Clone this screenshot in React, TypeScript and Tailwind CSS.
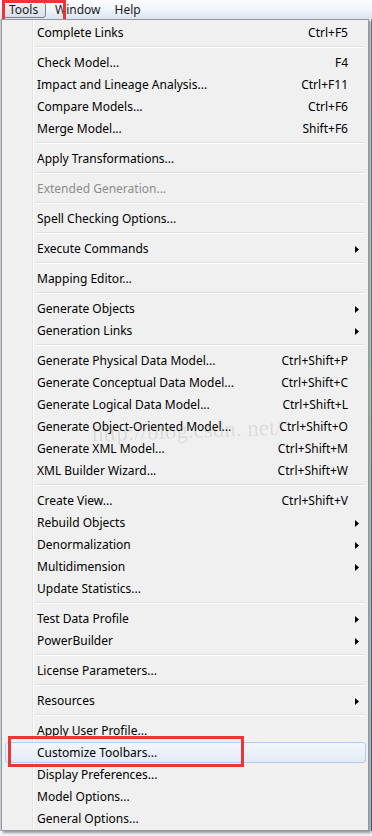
type Row =
  | { sep: true }
  | {
      sep?: false;
      label: string;
      shortcut?: string;
      sub?: boolean;
      disabled?: boolean;
      hot?: boolean;
    };

const rows: Row[] = [
  { label: "Complete Links", shortcut: "Ctrl+F5" },
  { sep: true },
  { label: "Check Model...", shortcut: "F4" },
  { label: "Impact and Lineage Analysis...", shortcut: "Ctrl+F11" },
  { label: "Compare Models...", shortcut: "Ctrl+F6" },
  { label: "Merge Model...", shortcut: "Shift+F6" },
  { sep: true },
  { label: "Apply Transformations..." },
  { sep: true },
  { label: "Extended Generation...", disabled: true },
  { sep: true },
  { label: "Spell Checking Options..." },
  { sep: true },
  { label: "Execute Commands", sub: true },
  { sep: true },
  { label: "Mapping Editor..." },
  { sep: true },
  { label: "Generate Objects", sub: true },
  { label: "Generation Links", sub: true },
  { sep: true },
  { label: "Generate Physical Data Model...", shortcut: "Ctrl+Shift+P" },
  { label: "Generate Conceptual Data Model...", shortcut: "Ctrl+Shift+C" },
  { label: "Generate Logical Data Model...", shortcut: "Ctrl+Shift+L" },
  { label: "Generate Object-Oriented Model...", shortcut: "Ctrl+Shift+O" },
  { label: "Generate XML Model...", shortcut: "Ctrl+Shift+M" },
  { label: "XML Builder Wizard...", shortcut: "Ctrl+Shift+W" },
  { sep: true },
  { label: "Create View...", shortcut: "Ctrl+Shift+V" },
  { label: "Rebuild Objects", sub: true },
  { label: "Denormalization", sub: true },
  { label: "Multidimension", sub: true },
  { label: "Update Statistics..." },
  { sep: true },
  { label: "Test Data Profile", sub: true },
  { label: "PowerBuilder", sub: true },
  { sep: true },
  { label: "License Parameters..." },
  { sep: true },
  { label: "Resources", sub: true },
  { sep: true },
  { label: "Apply User Profile..." },
  { label: "Customize Toolbars...", hot: true },
  { label: "Display Preferences..." },
  { label: "Model Options..." },
  { label: "General Options..." },
];

function Gutter() {
  return (
    <>
      <div className="w-[29px] shrink-0" />
      <div className="w-px shrink-0 bg-[#e2e3e3]" />
      <div className="w-px shrink-0 bg-white" />
    </>
  );
}

function Arrow() {
  return (
    <svg width="4" height="7" viewBox="0 0 4 7" className="ml-[7px]">
      <polygon points="0,0 4,3.5 0,7" fill="#000" />
    </svg>
  );
}

export default function App() {
  return (
    <div
      className="relative w-[372px] h-[836px] overflow-hidden bg-[#eef1f5] text-[12px] text-black"
      style={{ fontFamily: '"Noto Sans", "Open Sans", sans-serif' }}
    >
      {/* menu bar */}
      <div className="h-[19px] flex items-start pl-[3px] pt-[2px] bg-gradient-to-b from-[#fbfcfe] via-[#f1f5fa] to-[#dae3f0] text-[#1b1b1b]">
        <div className="w-[43px] h-[16px] rounded-[3px] border border-[#7c8189] bg-gradient-to-b from-[#eef1f5] to-[#d9e0ea] shadow-[inset_0_1px_0_rgba(255,255,255,0.8)] flex items-center pl-[5px] leading-none">
          Tools
        </div>
        <div className="ml-[9px] h-[16px] flex items-center leading-none">Window</div>
        <div className="ml-[14px] h-[16px] flex items-center leading-none">Help</div>
      </div>

      {/* annotation on Tools */}
      <div className="absolute left-[2px] top-0 w-[64px] h-[24px] border-[3px] border-[#ee3535]" />

      <div className="flex">
        <div className="w-px shrink-0 bg-[#c4cedb]" />
        <div className="relative w-[368px] shrink-0 border border-[#979797] bg-[#f0f0f0] p-px shadow-[2px_2px_2px_rgba(0,0,0,0.35)]">
          {rows.map((r, i) =>
            r.sep ? (
              <div key={i} className="flex h-[8px]">
                <Gutter />
                <div className="flex-1 pt-[3px] pl-px pr-[3px]">
                  <div className="h-px bg-[#e0e0e0]" />
                  <div className="h-px bg-white" />
                </div>
              </div>
            ) : (
              <div key={i} className="relative flex h-[22px]">
                {r.hot && (
                  <div className="absolute left-[2px] right-[1px] top-px bottom-0 rounded-[3px] border border-[#aecdf3] bg-gradient-to-b from-[#f3f7fc] to-[#e3ebf7]" />
                )}
                <Gutter />
                <div
                  className={
                    "relative flex-1 pl-[3px] pt-[2px] leading-[20px] whitespace-nowrap " +
                    (r.disabled ? "text-[#8d8d8d]" : "text-black")
                  }
                >
                  {r.label}
                </div>
                {r.shortcut && (
                  <div className="relative pt-[2px] leading-[20px] whitespace-nowrap">{r.shortcut}</div>
                )}
                <div className="relative w-[19px] shrink-0 flex items-center pt-[2px]">
                  {r.sub && <Arrow />}
                </div>
              </div>
            )
          )}

          {/* watermark */}
          <div
            className="absolute left-[90px] top-[394px] -rotate-2 text-[23px] text-black/10 whitespace-nowrap pointer-events-none"
            style={{ fontFamily: '"Liberation Serif", serif' }}
          >
            http://blog.csdn. net/
          </div>

          {/* annotation on Customize Toolbars */}
          <div className="absolute left-[6px] top-[716px] w-[236px] h-[31px] border-[3px] border-[#ee3535]" />
        </div>
        <div className="ml-[2px] w-[2px] h-[812px] bg-gradient-to-b from-[#6f87a6] via-[#3e9a6a] to-[#2262b0]" />
      </div>
    </div>
  );
}
